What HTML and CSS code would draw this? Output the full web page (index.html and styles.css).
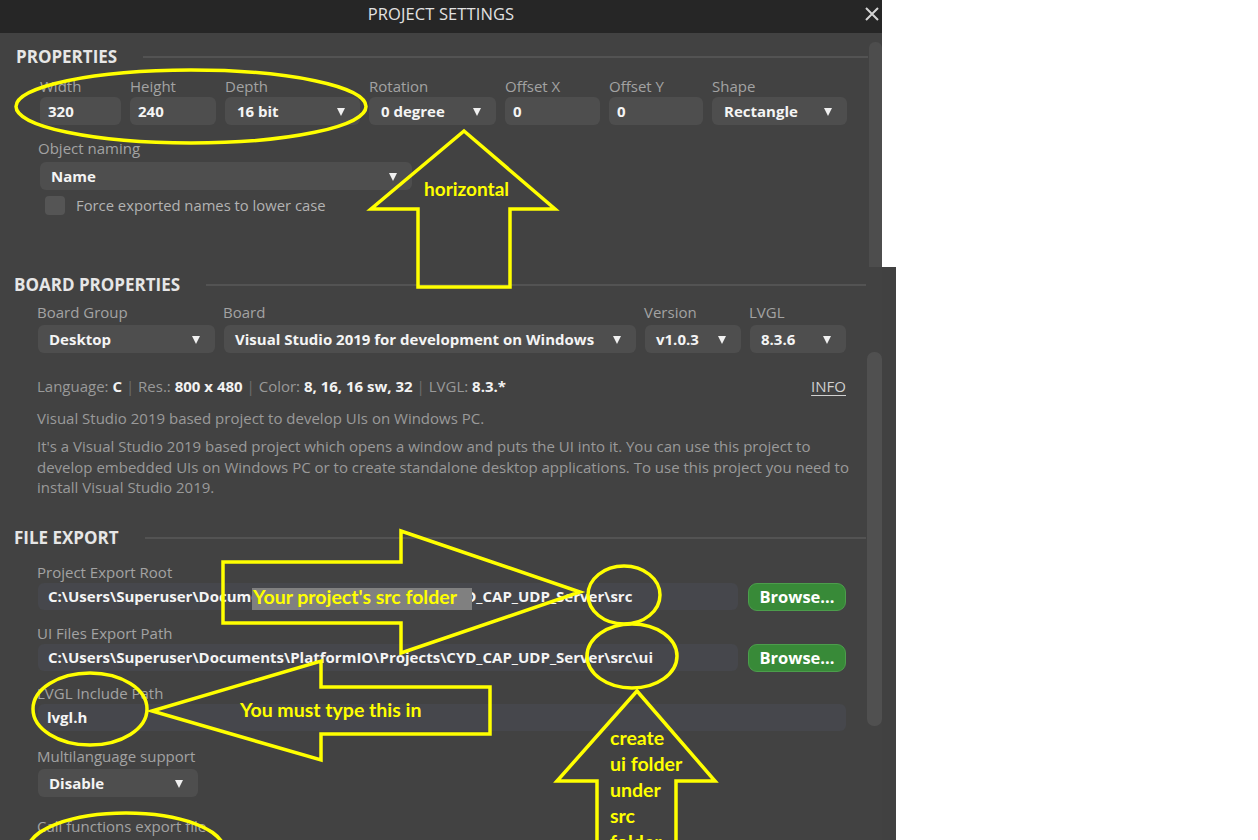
FILE: index.html
```html
<!DOCTYPE html>
<html lang="en">
<head>
<meta charset="utf-8">
<title>Project Settings</title>
<link rel="stylesheet" href="styles.css">
</head>
<body>
<div class="page">

  <section class="shot shot-top">
    <header class="titlebar">
      <span class="title">PROJECT SETTINGS</span>
      <svg class="close" width="14" height="14" viewBox="0 0 14 14"><path d="M1 1 L13 13 M13 1 L1 13" stroke="#d4d4d4" stroke-width="2" fill="none"/></svg>
    </header>
    <div class="panel panel-top">
      <div class="content content-top">
        <div class="section-head"><h2>PROPERTIES</h2><span class="rule"></span></div>
        <div class="row props">
          <div class="field w-width"><span class="lbl">Width</span><div class="input">320</div></div>
          <div class="field w-height"><span class="lbl">Height</span><div class="input">240</div></div>
          <div class="field w-depth"><span class="lbl">Depth</span><div class="select">16 bit</div></div>
          <div class="field w-rot"><span class="lbl">Rotation</span><div class="select">0 degree</div></div>
          <div class="field w-ox"><span class="lbl">Offset X</span><div class="input">0</div></div>
          <div class="field w-oy"><span class="lbl">Offset Y</span><div class="input">0</div></div>
          <div class="field w-shape"><span class="lbl">Shape</span><div class="select">Rectangle</div></div>
        </div>
        <div class="field naming"><span class="lbl">Object naming</span><div class="select">Name</div></div>
        <div class="check"><span class="box"></span><span class="check-text">Force exported names to lower case</span></div>
      </div>
      <div class="scroll scroll-top"><div class="thumb"></div></div>
    </div>
  </section>

  <section class="shot shot-bottom">
    <div class="content content-bottom">
      <div class="section-head"><h2>BOARD PROPERTIES</h2><span class="rule"></span></div>
      <div class="row board">
        <div class="field w-group"><span class="lbl">Board Group</span><div class="select">Desktop</div></div>
        <div class="field w-board"><span class="lbl">Board</span><div class="select">Visual Studio 2019 for development on Windows</div></div>
        <div class="field w-ver"><span class="lbl">Version</span><div class="select">v1.0.3</div></div>
        <div class="field w-lvgl"><span class="lbl">LVGL</span><div class="select">8.3.6</div></div>
      </div>
      <div class="info">
        <p class="specs">Language: <b>C</b> <span class="sep">|</span> Res.: <b>800 x 480</b> <span class="sep">|</span> Color: <b>8, 16, 16 sw, 32</b> <span class="sep">|</span> LVGL: <b>8.3.*</b></p>
        <a class="info-link">INFO</a>
      </div>
      <p class="desc short">Visual Studio 2019 based project to develop UIs on Windows PC.</p>
      <p class="desc long">It's a Visual Studio 2019 based project which opens a window and puts the UI into it. You can use this project to develop embedded UIs on Windows PC or to create standalone desktop applications. To use this project you need to install Visual Studio 2019.</p>

      <div class="section-head export-head"><h2>FILE EXPORT</h2><span class="rule"></span></div>
      <div class="export">
        <div class="field f-root"><span class="lbl">Project Export Root</span>
          <div class="path-row"><div class="path">C:\Users\Superuser\Documents\PlatformIO\Projects\CYD_CAP_UDP_Server\src</div><button class="browse">Browse...</button></div>
        </div>
        <div class="field f-ui"><span class="lbl">UI Files Export Path</span>
          <div class="path-row"><div class="path">C:\Users\Superuser\Documents\PlatformIO\Projects\CYD_CAP_UDP_Server\src\ui</div><button class="browse">Browse...</button></div>
        </div>
        <div class="field f-lvgl"><span class="lbl">LVGL Include Path</span>
          <div class="path full">lvgl.h</div>
        </div>
        <div class="field f-multi"><span class="lbl">Multilanguage support</span>
          <div class="select disable">Disable</div>
        </div>
        <div class="field f-call"><span class="lbl">Call functions export file</span></div>
      </div>
    </div>
    <div class="scroll scroll-bottom"><div class="thumb"></div></div>
    <div class="edge"></div>
  </section>

  <svg class="annot" width="1258" height="840" viewBox="0 0 1258 840">
    <rect x="252" y="588" width="220" height="22" fill="#808080"/>
    <g fill="none" stroke="#ffff00" stroke-width="3.5" stroke-linejoin="miter">
      <ellipse cx="191" cy="106.5" rx="175" ry="36.5"/>
      <polygon points="464,131 555,209 510,209 510,287 418,287 418,209 371,209"/>
      <polygon points="223,562 401,562 401,531 580,592 401,653 401,623 223,623"/>
      <ellipse cx="624" cy="595" rx="36" ry="29"/>
      <ellipse cx="632" cy="656" rx="45" ry="32"/>
      <polygon points="152,711 321,661 321,687 490,687 490,734 321,734 321,760"/>
      <ellipse cx="90" cy="709" rx="57" ry="36"/>
      <polygon points="637,691 715,781 676,781 676,850 597,850 597,781 557,781"/>
      <ellipse cx="126" cy="850" rx="98" ry="37"/>
    </g>
    <g class="note">
      <text x="424" y="196" class="n19">horizontal</text>
      <text x="253" y="604" class="n195">Your project's src folder</text>
      <text x="240" y="717" class="n195">You must type this in</text>
      <text x="610" y="745" class="n195">create</text>
      <text x="610" y="771" class="n195">ui folder</text>
      <text x="610" y="797" class="n195">under</text>
      <text x="610" y="823" class="n195">src</text>
      <text x="610" y="849" class="n195">folder</text>
    </g>
  </svg>
</div>
</body>
</html>
```

FILE: styles.css
```css
* { box-sizing: border-box; }

html, body {
  margin: 0;
  padding: 0;
  background: #ffffff;
}

body {
  font-family: "Open Sans", "Noto Sans", sans-serif;
  font-size: 15px;
  color: #a3a3a3;
}

.page {
  position: relative;
  width: 1258px;
  height: 840px;
  overflow: hidden;
}

/* ---------- top screenshot ---------- */
.shot-top {
  width: 882px;
  height: 267px;
  display: flex;
  flex-direction: column;
}

.titlebar {
  position: relative;
  height: 33px;
  background: #262626;
  display: flex;
  justify-content: center;
}

.title {
  font-size: 16.5px;
  line-height: 28px;
  color: #e2e2e2;
  letter-spacing: 0.1px;
}

.close {
  position: absolute;
  right: 3px;
  top: 7px;
}

.panel-top {
  flex: 1;
  display: flex;
  background: #424242;
}

.content {
  flex: 1;
  display: flex;
  flex-direction: column;
}

.content-top {
  padding: 14px 0 0 16px;
}

.scroll {
  display: flex;
  flex-direction: column;
}

.scroll-top {
  width: 13px;
  padding-top: 9px;
}

.scroll-top .thumb {
  flex: 1;
  background: #4d4d4d;
  border-radius: 6px 6px 0 0;
}

/* section headings */
.section-head {
  display: flex;
  align-items: center;
  gap: 26px;
  padding-right: 1px;
}

.section-head h2 {
  margin: 0;
  font-size: 17px;
  line-height: 20px;
  font-weight: 700;
  color: #e6e6e6;
}

.rule {
  flex: 1;
  height: 2px;
  background: #535353;
}

/* fields */
.row {
  display: flex;
  gap: 9px;
}

.field {
  display: flex;
  flex-direction: column;
}

.lbl {
  line-height: 20px;
  color: #a3a3a3;
  white-space: nowrap;
}

.input, .select {
  height: 28px;
  border-radius: 6px;
  background: #4e4e4e;
  color: #f4f4f4;
  font-weight: 700;
  line-height: 28px;
  white-space: nowrap;
}

.input {
  padding-left: 8px;
}

.select {
  position: relative;
  padding-left: 12px;
}

.select::after {
  content: "";
  position: absolute;
  right: 15px;
  top: 11px;
  border-left: 4.5px solid transparent;
  border-right: 4.5px solid transparent;
  border-top: 8px solid #f0f0f0;
}

.props {
  margin-top: 9px;
  padding-left: 24px;
}

.props .lbl { margin-bottom: 1px; }

.w-width { width: 81px; }
.w-height { width: 86px; }
.w-depth { width: 135px; }
.w-rot { width: 127px; }
.w-ox { width: 95px; }
.w-oy { width: 94px; }
.w-shape { width: 135px; }

.naming {
  width: 396px;
  margin-top: 13px;
  padding-left: 24px;
}

.naming .lbl { margin-bottom: 4px; margin-left: -2px; }
.naming .select { padding-left: 11px; }

.check {
  display: flex;
  align-items: center;
  margin-top: 5px;
  padding-left: 29px;
  gap: 11px;
}

.box {
  width: 20px;
  height: 19px;
  border-radius: 4px;
  background: #555555;
}

.check-text {
  line-height: 20px;
  font-size: 14.8px;
  color: #b3b3b3;
}

/* ---------- bottom screenshot ---------- */
.shot-bottom {
  width: 896px;
  height: 573px;
  display: flex;
  background: #424242;
}

.content-bottom {
  width: 867px;
  flex: none;
  padding: 8px 0 0 14px;
}

.scroll-bottom {
  width: 15px;
  padding-top: 85px;
}

.scroll-bottom .thumb {
  height: 374px;
  background: #505050;
  border-radius: 7px;
}

.edge {
  flex: 1;
  background: #414141;
}

.board {
  margin-top: 7px;
  padding-left: 24px;
}

.board .lbl { margin-bottom: 3px; margin-left: -1px; }
.board .select { padding-left: 11px; }

.w-group { width: 177px; }
.w-board { width: 412px; }
.w-ver { width: 96px; }
.w-lvgl { width: 96px; }

.info {
  display: flex;
  justify-content: space-between;
  align-items: center;
  margin-top: 23px;
  padding-left: 23px;
  width: 832px;
}

.specs {
  margin: 0;
  line-height: 20px;
  font-size: 15px;
  color: #999999;
}

.specs b {
  color: #f2f2f2;
  font-weight: 700;
}

.sep { color: #6e6e6e; }

.info-link {
  font-size: 15px;
  line-height: 20px;
  color: #d0d0d0;
  text-decoration: underline;
  text-underline-offset: 3px;
}

.desc {
  margin: 0;
  padding-left: 23px;
  font-size: 15px;
  color: #9a9a9a;
}

.desc.short {
  margin-top: 12px;
  line-height: 20px;
}

.desc.long {
  margin-top: 8px;
  line-height: 20.5px;
  width: 840px;
}

.export-head {
  margin-top: 30px;
}

.export {
  display: flex;
  flex-direction: column;
  padding-left: 24px;
}

.export .lbl { margin-bottom: 1px; margin-left: -1px; }

.f-root { margin-top: 14px; }
.f-ui { margin-top: 12px; }
.f-lvgl { margin-top: 11px; }
.f-multi { margin-top: 15px; }
.f-multi .lbl { margin-bottom: 3px; }
.f-call { margin-top: 19px; }

.path-row {
  display: flex;
  gap: 10px;
}

.path {
  width: 700px;
  height: 27px;
  line-height: 27px;
  border-radius: 6px;
  background: #46474c;
  color: #f4f4f4;
  font-weight: 700;
  padding-left: 10px;
  white-space: nowrap;
  overflow: hidden;
}

.path.full {
  width: 808px;
  padding-left: 9px;
}

.browse {
  width: 98px;
  height: 28px;
  padding: 0;
  border: 1px solid #4c9d4c;
  border-radius: 9px;
  background: #388a38;
  color: #ffffff;
  font-family: "Open Sans", "Noto Sans", sans-serif;
  font-size: 16.5px;
  font-weight: 700;
  line-height: 26px;
}

.disable {
  width: 160px;
  padding-left: 11px;
}

/* ---------- annotation overlay ---------- */
.annot {
  position: absolute;
  left: 0;
  top: 0;
  pointer-events: none;
}

.note text {
  fill: #ffff00;
  font-family: "Lato", "Liberation Sans", sans-serif;
  font-weight: 700;
}

.n19 { font-size: 19px; }
.n195 { font-size: 19.5px; }
```
